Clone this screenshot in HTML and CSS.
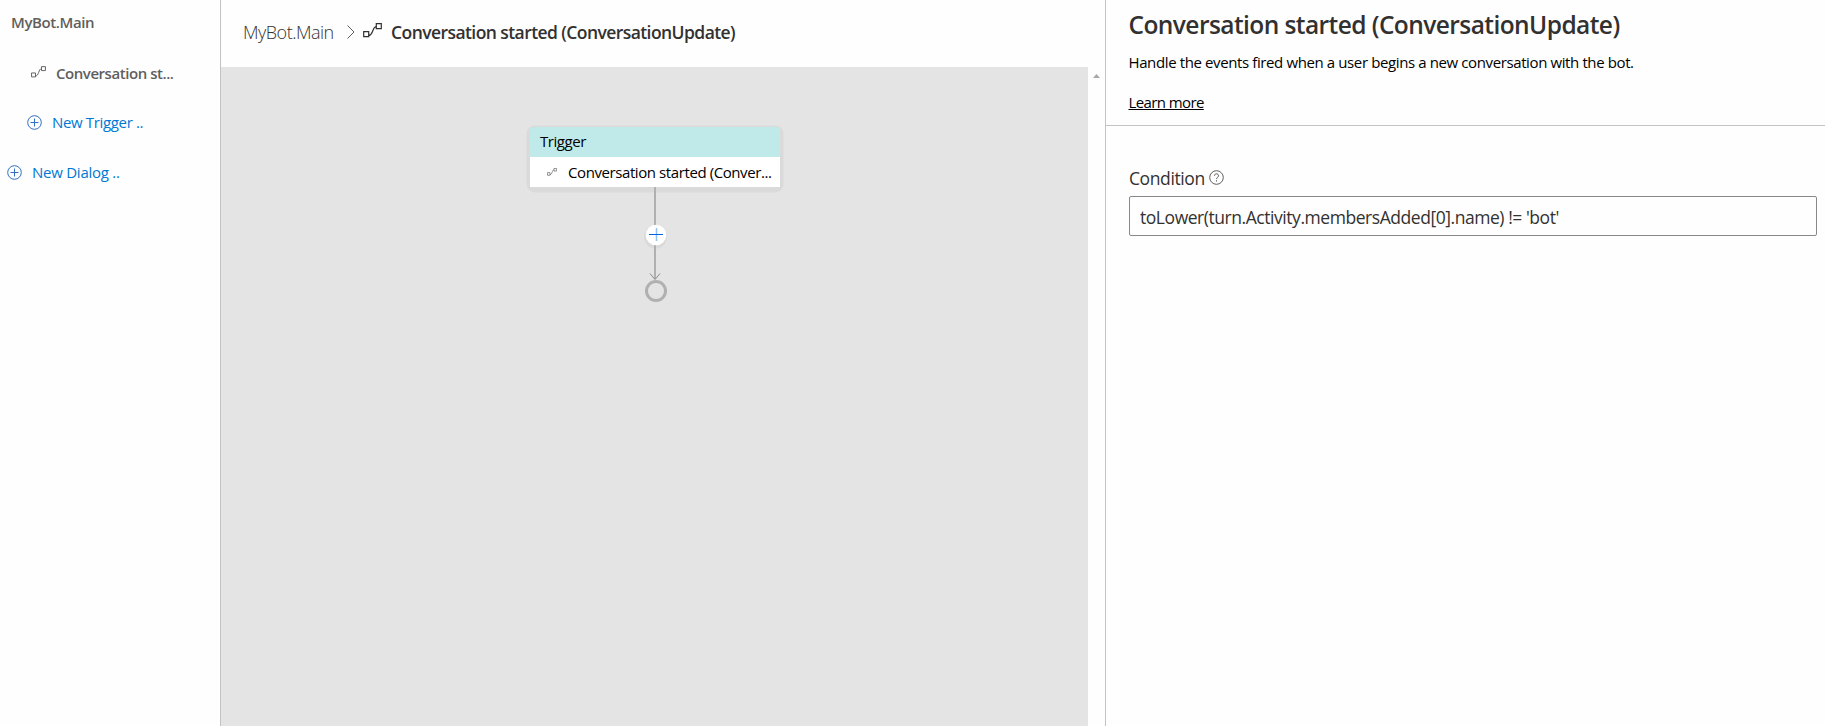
FILE: index.html
```html
<!DOCTYPE html>
<html lang="en">
<head>
<meta charset="utf-8">
<title>MyBot.Main</title>
<link rel="stylesheet" href="styles.css">
</head>
<body>
<svg class="defs" width="0" height="0">
  <symbol id="flow" viewBox="0 0 19 15">
    <path d="M.7 8.700h5v5h-5zM13.300.7h5v5h-5zM5.700 12.500c2.500 0 3-2 4-4.500s1.500-4.500 3.600-4.500" fill="none" stroke="currentColor" stroke-width="1.200"/>
  </symbol>
  <symbol id="plus" viewBox="0 0 15 15">
    <circle cx="7.500" cy="7.500" r="6.800" fill="none" stroke="currentColor"/>
    <path d="M7.500 3.500v8M3.500 7.500h8" stroke="currentColor"/>
  </symbol>
</svg>
<div class="app">
  <nav class="tree">
    <div class="row root"><span class="t-root">MyBot.Main</span></div>
    <div class="row item"><svg class="flow"><use href="#flow"/></svg><span class="t-item">Conversation st...</span></div>
    <div class="row link trigger"><svg class="plus"><use href="#plus"/></svg><span class="t-trigger">New Trigger ..</span></div>
    <div class="row link dialog"><svg class="plus"><use href="#plus"/></svg><span class="t-dialog">New Dialog ..</span></div>
  </nav>
  <main class="editor">
    <header class="crumbs">
      <span class="t-crumb">MyBot.Main</span>
      <svg class="chevron" viewBox="0 0 8 14"><path d="M.5.5 7 7 .5 13.500" fill="none" stroke="currentColor"/></svg>
      <svg class="flow-lg"><use href="#flow"/></svg>
      <span class="t-current">Conversation started (ConversationUpdate)</span>
    </header>
    <div class="body">
      <div class="canvas">
        <div class="node">
          <div class="node-head"><span class="t-nodehead">Trigger</span></div>
          <div class="node-body"><svg class="flow-sm"><use href="#flow"/></svg><span class="t-node">Conversation started (Conver...</span></div>
        </div>
        <svg class="edges" viewBox="0 0 24 116">
          <circle cx="11.500" cy="50" r="11.500" fill="#dadada"/>
          <path d="M11 0v92" stroke="#b0b0b0" stroke-width="2"/>
          <path d="M6 86.500 11 92.500 16 86.500" fill="none" stroke="#8c8c8c" stroke-width="1"/>
          <circle cx="12" cy="48" r="10.300" fill="#fff"/>
          <path d="M12.500 41v13" stroke="#8fc1f5" stroke-width="1.500"/>
          <path d="M5 47.500h14" stroke="#0063e0"/>
          <circle cx="12" cy="104" r="9.500" fill="none" stroke="#b0b0b0" stroke-width="3"/>
        </svg>
      </div>
      <div class="scroll"><i class="up"></i></div>
    </div>
  </main>
  <aside class="panel">
    <header class="panel-head">
      <h1><span class="t-title">Conversation started (ConversationUpdate)</span></h1>
      <p><span class="t-desc">Handle the events fired when a user begins a new conversation with the bot.</span></p>
      <a class="learn"><span class="t-learn">Learn more</span></a>
    </header>
    <div class="field">
      <label class="label"><span class="t-label">Condition</span>
        <svg class="help" viewBox="0 0 15 15"><circle cx="7.500" cy="7.500" r="6.800" fill="none" stroke="currentColor"/><path d="M5.500 5.800c0-2.700 4-2.700 4 0 0 1.600-2 1.500-2 3.200M7.500 10.200v1.300" fill="none" stroke="currentColor"/></svg>
      </label>
      <div class="input"><span class="t-input">toLower(turn.Activity.membersAdded[0].name) != 'bot'</span></div>
    </div>
  </aside>
</div>
</body>
</html>
```
FILE: styles.css
```css
* { box-sizing: border-box; }
body { margin: 0; font-family: "Open Sans", "Noto Sans", sans-serif; font-size: 15px; background: #fefefe; color: #000; }
.defs { position: absolute; }
svg { display: block; flex: none; }
span { white-space: nowrap; }
.app { display: flex; width: 1825px; height: 726px; overflow: hidden; }

.tree { width: 221px; flex: none; border-right: 1px solid #c3c3c3; }
.row { display: flex; align-items: center; }
.root { height: 46px; padding: 0 0 2px 11px; font-weight: 600; color: #605e5c; }
.item { height: 54px; padding-left: 31px; font-weight: 600; color: #605e5c; }
.link { color: #0078d4; }
.trigger { height: 44px; padding-left: 27px; }
.dialog { height: 56px; padding-left: 7px; }
.flow { width: 15px; height: 12px; margin: 0 10px 3px 0; }
.plus { width: 15px; height: 15px; margin-right: 10px; color: #2f6fc4; }
.t-root { letter-spacing: -.4px; }
.t-item { letter-spacing: -.45px; }
.t-trigger { letter-spacing: -.35px; }
.t-dialog { letter-spacing: -.25px; }

.editor { width: 885px; flex: none; display: flex; flex-direction: column; border-right: 1px solid #c3c3c3; }
.crumbs { height: 67px; display: flex; align-items: center; padding: 0 0 3px 22px; color: #323130; }
.t-crumb { width: 91px; font-size: 18px; font-weight: 300; letter-spacing: -.5px; }
.chevron { width: 8px; height: 14px; margin-left: 13px; color: #605e5c; }
.flow-lg { width: 19px; height: 15px; margin: 0 9px 4px 8px; }
.t-current { font-size: 17.5px; font-weight: 600; letter-spacing: -.57px; }
.body { flex: 1; display: flex; }
.canvas { width: 867px; background: #e4e4e4; padding-top: 60px; }
.node { width: 250px; height: 60px; margin-left: 309px; box-shadow: 0 2px 0 3.500px #dadada; border-radius: 5px; }
.node-head { height: 30px; display: flex; align-items: center; padding: 0 0 3px 10px; background: #c0eae9; border-radius: 3px 3px 0 0; letter-spacing: -.45px; }
.node-body { height: 30px; display: flex; align-items: center; padding-left: 17px; background: #fff; letter-spacing: -.41px; }
.flow-sm { width: 10px; height: 8px; margin-right: 11px; color: #555; }
.edges { width: 24px; height: 116px; margin-left: 423px; position: relative; }
.scroll { flex: 1; padding: 7px 0 0 5px; }
.up { display: block; width: 7px; height: 4px; background: #a8a8a8; clip-path: polygon(50% 0, 100% 100%, 0 100%); }

.panel { flex: 1; }
.panel-head { height: 126px; padding-left: 22.5px; border-bottom: 1px solid #c3c3c3; }
h1 { margin: 0; height: 49px; line-height: 49px; font-size: 24.5px; font-weight: 600; color: #323130; letter-spacing: -.57px; }
p { margin: 0; height: 26px; line-height: 26px; letter-spacing: -.385px; }
.learn { display: block; margin-top: 14px; height: 26px; line-height: 26px; text-decoration: underline; letter-spacing: -.6px; }
.field { padding: 40px 8px 0 23px; color: #323130; }
.label { display: flex; height: 30px; align-items: center; font-size: 17.5px; padding-bottom: 6px; letter-spacing: -.4px; }
.help { width: 15px; height: 15px; margin: 0 0 2px 4px; color: #605e5c; }
.input { height: 40px; border: 1px solid #8a8886; border-radius: 2px; display: flex; align-items: center; padding: 1px 0 0 10px; font-size: 17.5px; letter-spacing: -.45px; }
```
